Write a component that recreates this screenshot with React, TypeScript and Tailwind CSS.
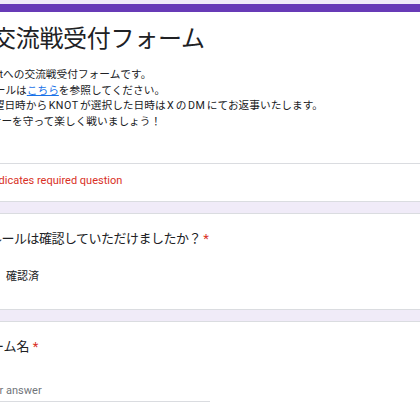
import React from "react";

const font = { fontFamily: "Roboto, 'Noto Sans CJK JP', sans-serif" };

export default function App() {
  return (
    <div
      className="w-[420px] h-[420px] overflow-hidden bg-[#f0ebf8] text-[#202124]"
      style={font}
    >
      <div className="pt-[4px] flex flex-col gap-[11px] w-[460px] ml-[-20px]">
        {/* Header card */}
        <div className="bg-white border-b border-[#dadce0]">
          <div className="h-[8px] bg-[#673ab7]" />
          <div className="pl-[12px] pt-[11px] pb-[34px]">
            <div className="text-[24px] leading-[32px] tracking-[-0.3px]">
              交流戦受付フォーム
            </div>
            <div className="mt-[12px] text-[10.7px] leading-[15.6px] whitespace-nowrap">
              <div className="ml-[-11px]">Knotへの交流戦受付フォームです。</div>
              <div className="ml-[-8px]">
                ルールは<span className="text-[#1a73e8] underline">こちら</span>を参照してください。
              </div>
              <div className="ml-[-9px]">
                希望日時から<span className="mx-[1.5px] tracking-[0.5px]">KNOT</span>が選択した日時は
                <span className="mx-[1.5px] tracking-[0.5px]">X</span>の
                <span className="mx-[1.5px] tracking-[0.5px]">DM</span>にてお返事いたします。
              </div>
              <div className="ml-[-12px]">マナーを守って楽しく戦いましょう！</div>
            </div>
          </div>
          <div className="h-px bg-[#dadce0]" />
          <div className="pl-[2px] pt-[9px] pb-[12px] text-[11px] leading-[16px] text-[#d93025]">
            * Indicates required question
          </div>
        </div>

        {/* Question 1 */}
        <div className="bg-white border-y border-[#dadce0] h-[97px]">
          <div className="pl-[9px] pt-[16px] text-[13px] leading-[18px] tracking-[-0.5px]">
            ルールは確認していただけましたか？<span className="text-[#d93025] ml-[2px]">*</span>
          </div>
          <div className="pl-[26px] mt-[21px] text-[11px] leading-[16px]">確認済</div>
        </div>

        {/* Question 2 */}
        <div className="bg-white border-t border-[#dadce0] h-[120px]">
          <div className="ml-[-2px] pt-[16px] text-[13px] leading-[18px]">
            チーム名<span className="text-[#d93025] ml-[3px]">*</span>
          </div>
          <div className="mt-[27px] w-[230px] border-b border-[#dadce0] pb-[2px] pl-[1px] text-[11px] leading-[16px] text-[#70757a]">
            Your answer
          </div>
        </div>
      </div>
    </div>
  );
}
